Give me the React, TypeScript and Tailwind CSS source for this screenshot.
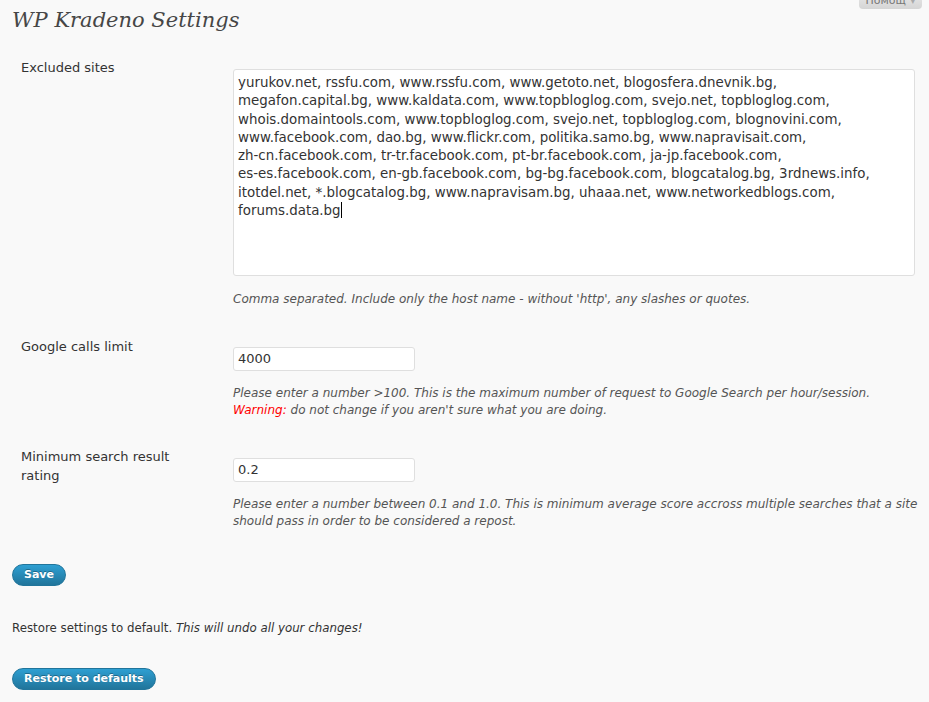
import React from 'react';

// lines of the excluded sites box, wrapped as in the screenshot
const excludedLines = [
  'yurukov.net, rssfu.com, www.rssfu.com, www.getoto.net, blogosfera.dnevnik.bg,',
  'megafon.capital.bg, www.kaldata.com, www.topbloglog.com, svejo.net, topbloglog.com,',
  'whois.domaintools.com, www.topbloglog.com, svejo.net, topbloglog.com, blognovini.com,',
  'www.facebook.com, dao.bg, www.flickr.com, politika.samo.bg, www.napravisait.com,',
  'zh-cn.facebook.com, tr-tr.facebook.com, pt-br.facebook.com, ja-jp.facebook.com,',
  'es-es.facebook.com, en-gb.facebook.com, bg-bg.facebook.com, blogcatalog.bg, 3rdnews.info,',
  'itotdel.net, *.blogcatalog.bg, www.napravisam.bg, uhaaa.net, www.networkedblogs.com,',
  'forums.data.bg',
];

const BlueButton = ({ children }: { children: React.ReactNode }) => (
  <button className="h-[22px] px-[11px] rounded-[11px] border border-[#21759b] bg-gradient-to-b from-[#2e9fd2] to-[#21759b] text-white text-[11px] font-bold leading-[20px] [text-shadow:0_-1px_0_rgba(0,0,0,0.3)]">
    {children}
  </button>
);

const App: React.FC = () => {
  return (
    <div className="relative min-h-[702px] w-[929px] bg-[#f9f9f9] text-[#333] font-['DejaVu_Sans',Verdana,sans-serif] overflow-hidden">
      {/* help tab */}
      <div className="absolute top-[-7px] right-[7px] h-[16px] px-[6px] rounded-b-[4px] bg-gradient-to-b from-[#e9e9e9] to-[#d5d5d5] text-[11px] leading-[16px] text-[#777] flex items-center gap-1">
        <span>Помощ</span>
        <span className="text-[8px] text-[#aaa]">▼</span>
      </div>

      <div className="px-[12px]">
        <h2 className="pt-[6px] h-[44px] text-[21px] leading-[29px] italic text-[#464646] font-['DejaVu_Serif','Liberation_Serif',Georgia,serif]">
          WP Kradeno Settings
        </h2>

        {/* settings table */}
        <div className="mt-[14px] grid grid-cols-[221px_1fr]">
          {/* excluded sites */}
          <div className="pl-[9px] text-[13px] leading-[19px]">Excluded sites</div>
          <div className="pr-[14px] -mt-[1px]">
            <div className="mt-[12px] h-[207px] w-[682px] rounded-[3px] border border-[#dfdfdf] bg-white px-[4px] pt-[4px] text-[13.4px] leading-[18.3px] text-[#333]">
              {excludedLines.map((line, i) => (
                <div key={i} className="whitespace-nowrap">
                  {line}
                  {i === excludedLines.length - 1 && <span className="inline-block w-px h-[16px] bg-black align-middle -mt-[2px]" />}
                </div>
              ))}
            </div>
            <p className="mt-[15px] text-[12px] leading-[17px] italic text-[#555]">
              Comma separated. Include only the host name - without 'http', any slashes or quotes.
            </p>
          </div>

          {/* google calls limit */}
          <div className="mt-[28px] pt-[1px] pl-[9px] text-[13px] leading-[19px]">Google calls limit</div>
          <div className="mt-[28px]">
            <div className="mt-[10.5px] h-[24px] w-[182px] rounded-[3px] border border-[#dfdfdf] bg-white px-[4px] text-[13px] leading-[22px]">4000</div>
            <p className="mt-[14.5px] text-[12px] leading-[17px] italic text-[#555]">
              Please enter a number &gt;100. This is the maximum number of request to Google Search per hour/session.
              <br />
              <span className="text-[#f00]">Warning:</span> do not change if you aren't sure what you are doing.
            </p>
          </div>

          {/* minimum rating */}
          <div className="mt-[27px] pt-[1px] pl-[9px] text-[13px] leading-[19px] w-[190px]">Minimum search result rating</div>
          <div className="mt-[27px]">
            <div className="mt-[11.5px] h-[24px] w-[182px] rounded-[3px] border border-[#dfdfdf] bg-white px-[4px] text-[13px] leading-[22px]">0.2</div>
            <p className="mt-[14.5px] text-[12px] leading-[17px] italic text-[#555]">
              Please enter a number between 0.1 and 1.0. This is minimum average score accross multiple searches that a site should pass in order to be considered a repost.
            </p>
          </div>
        </div>

        <div className="mt-[33.5px] flex">
          <BlueButton>Save</BlueButton>
        </div>

        <p className="mt-[33px] text-[11.8px] leading-[19px]">
          Restore settings to default. <em>This will undo all your changes!</em>
        </p>

        <div className="mt-[30.5px] flex">
          <BlueButton>Restore to defaults</BlueButton>
        </div>
      </div>
    </div>
  );
};

export default App;
